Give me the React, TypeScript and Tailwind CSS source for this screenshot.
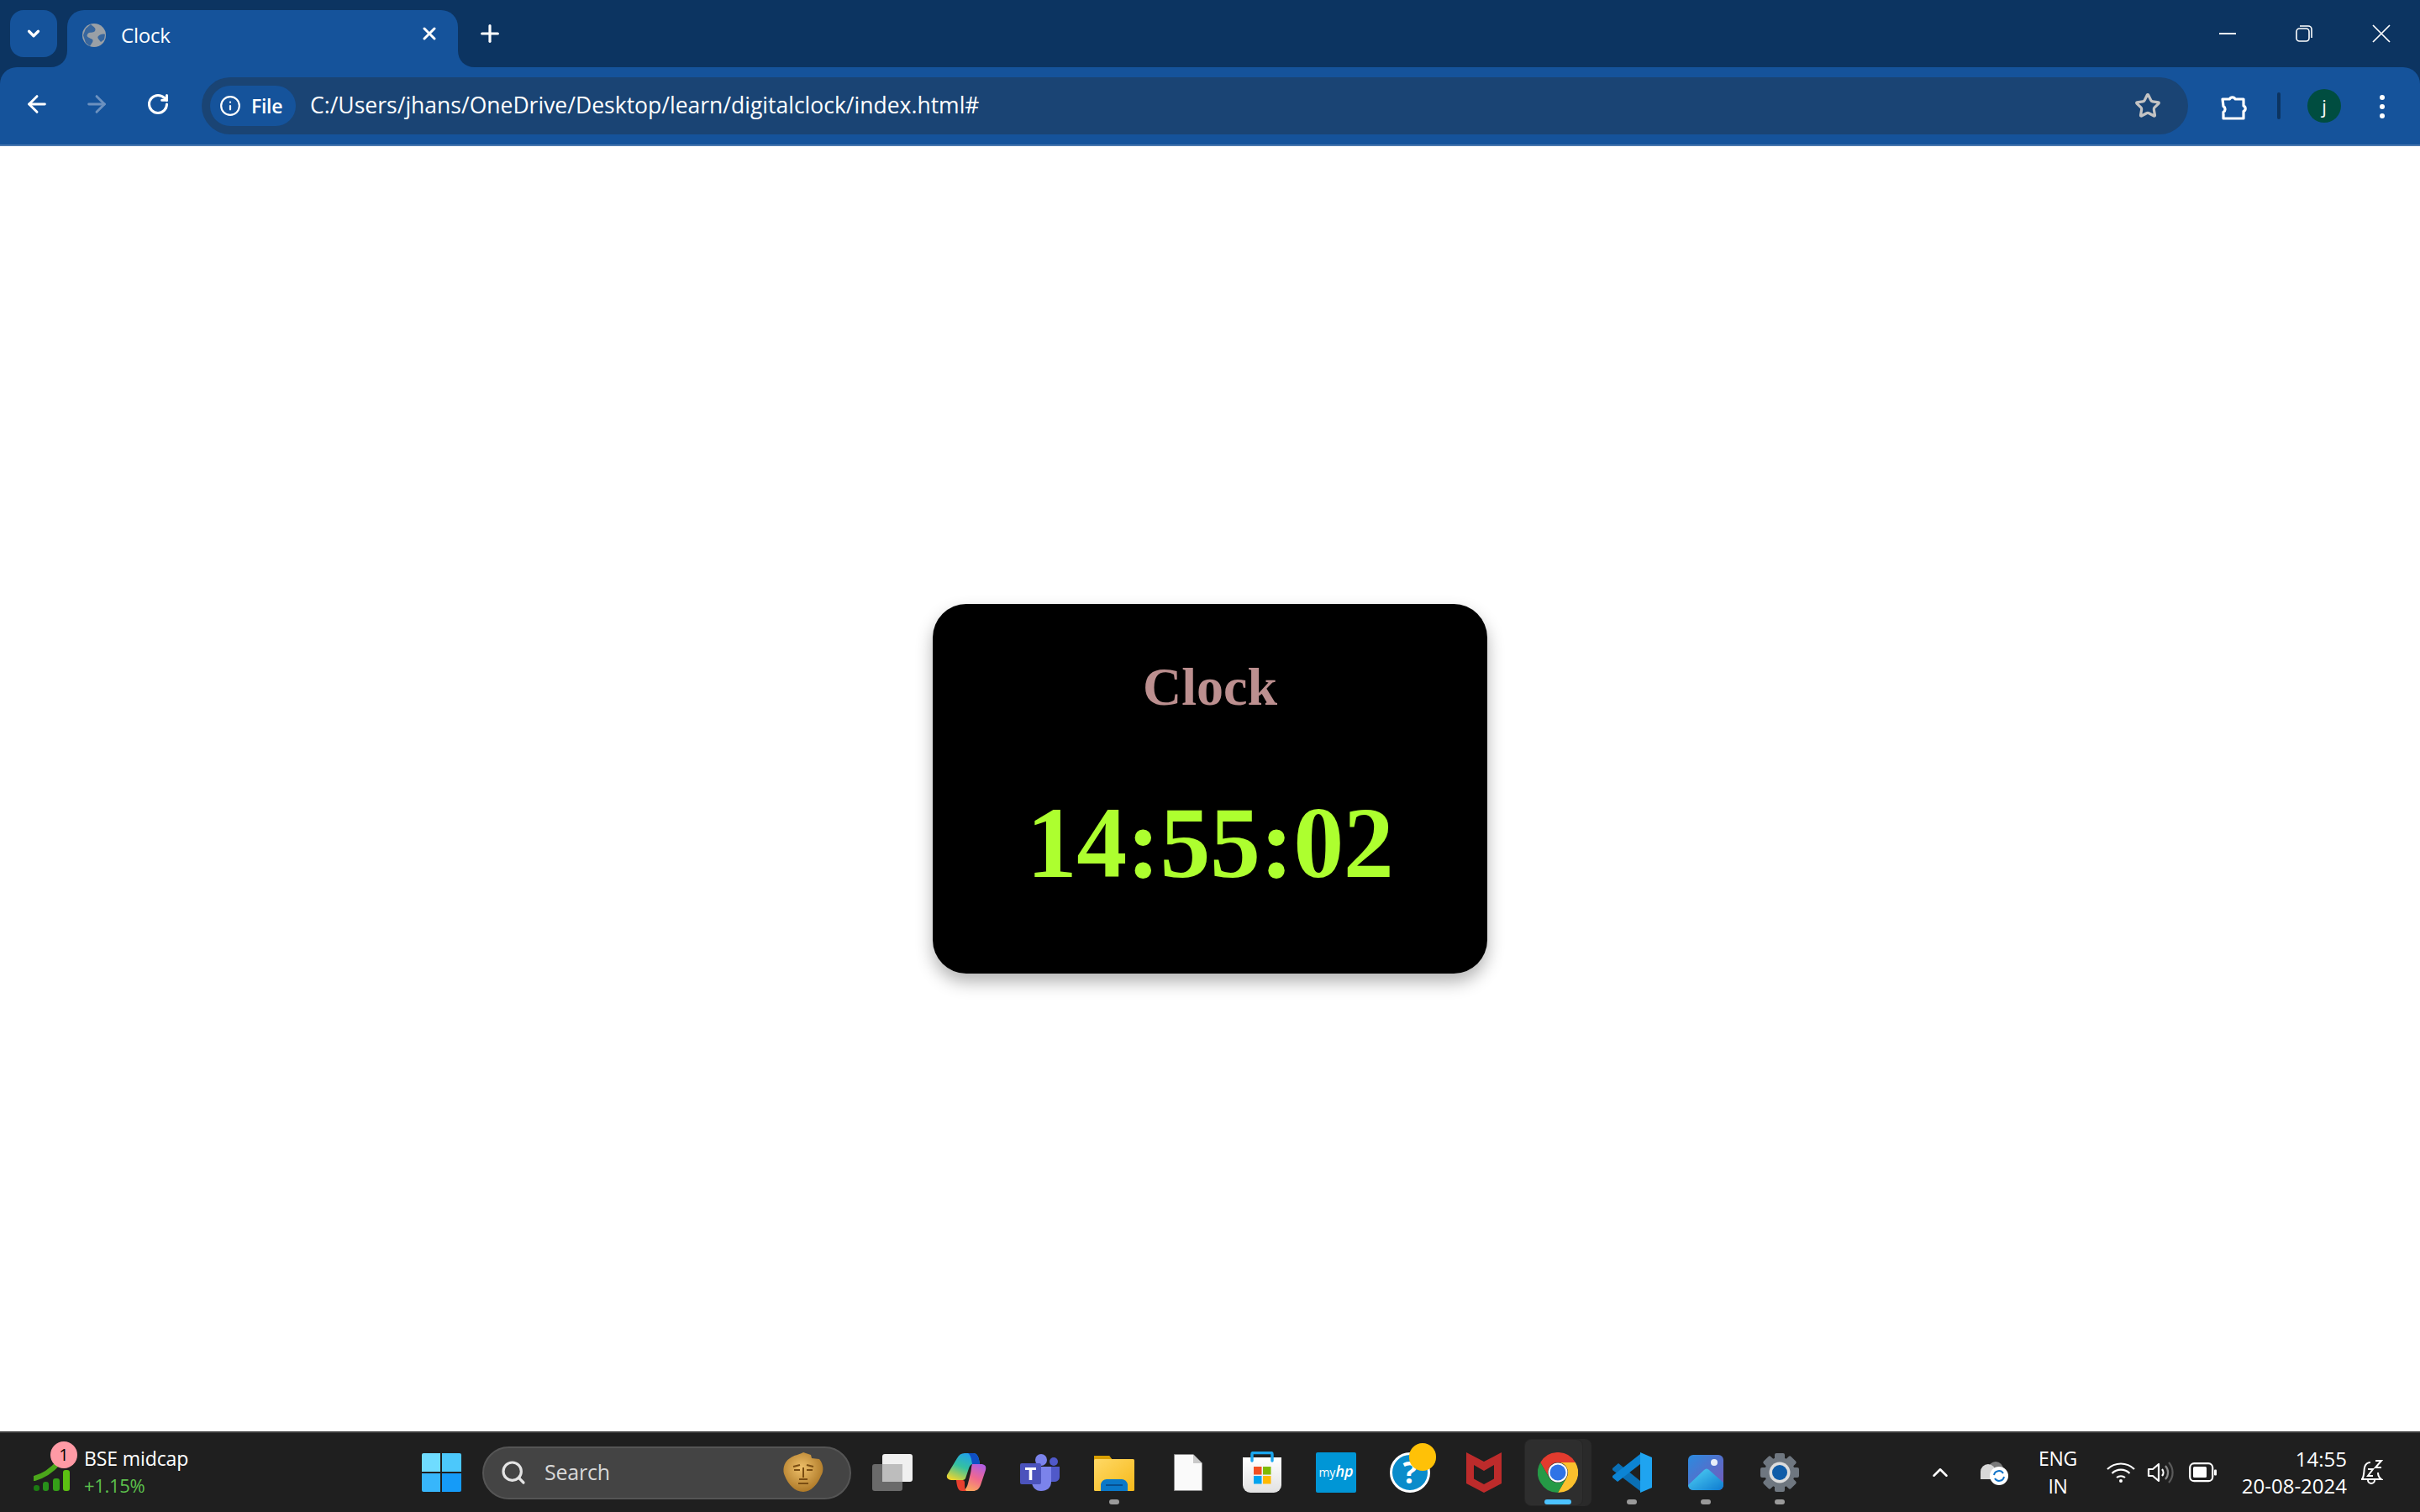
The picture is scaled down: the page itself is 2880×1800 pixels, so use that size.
import { ArrowLeft, ArrowRight, ChevronDown, ChevronUp, Info, Plus, RotateCw, Search, Star, X } from 'lucide-react'
import type { ReactNode } from 'react'

function Favicon() {
  return (
    <svg width="28" height="28" viewBox="0 0 28 28">
      <circle cx="14" cy="14" r="14" fill="#9aa0a6" />
      <path d="M10 1 C13 4 17 5 15 9 C13 12 8 9 6 13 C4 16 9 17 12 19 C14 21 10 25 9 27 L4 23 L1 14 L4 6Z" fill="#15539b" opacity="0.75" />
      <path d="M27 13 C24 12 21 13 19 15 C17 17 20 19 22 22 L26 19Z" fill="#15539b" opacity="0.75" />
    </svg>
  )
}

function Flare({ side }: { side: 'left' | 'right' }) {
  return (
    <svg className={side === 'left' ? 'absolute bottom-0 -left-5' : 'absolute bottom-0 -right-5'} width="20" height="20" viewBox="0 0 20 20">
      <path d={side === 'left' ? 'M0 20 C12 20 20 12 20 0 V20Z' : 'M0 0 C0 12 8 20 20 20 H0Z'} fill="#15539b" />
    </svg>
  )
}

function TabStrip() {
  return (
    <div className="h-20 bg-[#0c3461] flex text-white">
      <div className="mt-3 ml-3 w-14 h-14 rounded-2xl bg-[#15539b] flex items-center justify-center">
        <ChevronDown size={22} strokeWidth={3.5} />
      </div>
      <div className="relative mt-3 ml-3 w-[465px] h-[68px] rounded-t-[20px] bg-[#15539b] flex items-center pl-[18px] pb-[8px]">
        <Flare side="left" />
        <Favicon />
        <span className="ml-[18px] text-[24px] font-['Open_Sans',sans-serif] tracking-[-0.2px]">Clock</span>
        <X className="absolute right-[22px] top-[16px]" size={24} strokeWidth={3} />
        <Flare side="right" />
      </div>
      <div className="ml-[22px] mt-[24px]">
        <Plus size={32} strokeWidth={2.4} />
      </div>
      <div className="ml-auto flex">
        <div className="w-[92px] h-20 flex justify-center pt-[39px] pl-[2px]">
          <div className="w-5 h-0.5 bg-white" />
        </div>
        <div className="w-[92px] h-20 flex justify-center pt-[30px]">
          <svg width="20" height="20" viewBox="0 0 20 20" fill="none" stroke="white" strokeWidth="1.6">
            <rect x="1" y="4" width="15" height="15" rx="3.5" />
            <path d="M5 1 H15 A4 4 0 0 1 19 5 V15" />
          </svg>
        </div>
        <div className="w-[92px] h-20 flex justify-center pt-[29px]">
          <svg width="22" height="22" viewBox="0 0 22 22" stroke="white" strokeWidth="1.7">
            <path d="M1 1 L21 21 M21 1 L1 21" />
          </svg>
        </div>
      </div>
    </div>
  )
}

function Toolbar() {
  return (
    <div className="h-[94px] bg-[#15539b] rounded-t-[20px] border-b-2 border-[#4a78af] flex items-start text-white">
      <div className="mt-[28px] ml-[28px]">
        <ArrowLeft size={32} strokeWidth={2.2} />
      </div>
      <div className="mt-[28px] ml-[39px] text-[#6c91bf]">
        <ArrowRight size={32} strokeWidth={2.2} />
      </div>
      <div className="mt-[30px] ml-[43px]">
        <RotateCw size={28} strokeWidth={2.6} />
      </div>
      <div className="mt-3 ml-[38px] w-[2364px] h-[68px] rounded-[34px] bg-[#1a4474] flex items-center pl-[10px]">
        <div className="w-[102px] h-12 rounded-3xl bg-[#15539b] flex items-center pl-[11px] gap-[12px] font-['Open_Sans',sans-serif]">
          <Info size={26} strokeWidth={2} />
          <span className="text-[23px] font-semibold tracking-[-0.3px]">File</span>
        </div>
        <span className="ml-[17px] text-[26.5px] font-['Open_Sans',sans-serif]">
          C:/Users/jhans/OneDrive/Desktop/learn/digitalclock/index.html#
        </span>
        <Star className="ml-auto mr-[32px] text-[#c4c4c4]" size={32} strokeWidth={2.4} />
      </div>
      <div className="mt-[32px] ml-[38px]">
        <svg width="32" height="32" viewBox="0 0 32 32" fill="none" stroke="white" strokeWidth="3.2" strokeLinejoin="round">
          <path d="M3 6 H11.5 A3.5 3.5 0 0 1 18 6 H28 V14 A3.5 3.5 0 0 1 28 20.5 V29 H4 V21.5 A4 4 0 0 0 4 14.5Z" />
        </svg>
      </div>
      <div className="mt-[30px] ml-[36px] w-1 h-8 rounded-sm bg-[#0c3461]" />
      <div className="mt-[26px] ml-[32px] w-10 h-10 rounded-full bg-[#004d40] flex items-center justify-center text-[22px] font-['Open_Sans',sans-serif]">
        j
      </div>
      <div className="mt-[33px] ml-[46px] flex flex-col gap-[5px]">
        <div className="w-[6px] h-[6px] rounded-full bg-white" />
        <div className="w-[6px] h-[6px] rounded-full bg-white" />
        <div className="w-[6px] h-[6px] rounded-full bg-white" />
      </div>
    </div>
  )
}

function ClockCard() {
  return (
    <div className="w-[660px] h-[440px] rounded-[40px] bg-black shadow-[0_10px_20px_rgba(0,0,0,0.3)] flex flex-col items-center font-['Liberation_Serif',serif] font-bold">
      <h1 className="mt-[62px] text-[64px] leading-[74px] text-[#bc8f8f]">Clock</h1>
      <div className="mt-[80px] text-[120px] leading-[138px] tracking-[-0.4px] text-[#adff2f]">14:55:02</div>
    </div>
  )
}

function MaskIcon() {
  return (
    <svg width="50" height="48" viewBox="0 0 50 48">
      <defs>
        <radialGradient id="gold" cx="0.45" cy="0.4" r="0.7">
          <stop offset="0" stopColor="#efc06a" />
          <stop offset="1" stopColor="#a36d1c" />
        </radialGradient>
      </defs>
      <path d="M25 0 L34 3 L35 7 L44 8 C49 14 50 22 46 28 C42 38 34 47 25 47 C15 47 7 38 3 28 C0 22 1 12 9 7 C14 3 20 3 25 0Z" fill="url(#gold)" />
      <path d="M13 17 L21 15 M29 15 L37 17 M14 21 H21 M29 21 H36 M25 18 V30 M20 32 H30 M19 37 H31" stroke="#7a4d12" strokeWidth="2" fill="none" />
    </svg>
  )
}

function TaskView() {
  return (
    <svg width="48" height="44" viewBox="0 0 48 44">
      <rect x="0" y="12" width="36" height="32" rx="3" fill="#6a6a6a" />
      <rect x="12" y="0" width="36" height="33" rx="3" fill="#f0f0f0" />
      <rect x="12" y="12" width="24" height="21" fill="#bdbdbd" />
    </svg>
  )
}

function Copilot() {
  return (
    <svg width="48" height="46" viewBox="0 0 48 46">
      <defs>
        <linearGradient id="copL" x1="0.7" y1="0" x2="0.2" y2="1">
          <stop offset="0" stopColor="#1f9ff0" />
          <stop offset="0.5" stopColor="#35c1a0" />
          <stop offset="1" stopColor="#f2d52c" />
        </linearGradient>
        <linearGradient id="copR" x1="0.7" y1="0" x2="0.3" y2="1">
          <stop offset="0" stopColor="#b45ee0" />
          <stop offset="0.5" stopColor="#f0688e" />
          <stop offset="1" stopColor="#fba95c" />
        </linearGradient>
      </defs>
      <path d="M13 6 C15 2 18 0 22 0 H32 C37 0 39 4 40 13 H32 C29 13 28 15 27 18 L23 30 C22 32 19 33 8 32 C3 32 0 30 1 26Z" fill="url(#copL)" />
      <path d="M26 0 H32 C37 0 39 4 40 13 H31 C30 6 29 2 26 0Z" fill="#0f4fc4" />
      <path d="M31 13 H41 C46 13 48 15 47 20 L41 38 C39 43 36 45 32 45 H19 C23 44 25 40 26 36 L29 24 C30 20 30 15 31 13Z" fill="url(#copR)" />
      <path d="M12 32 H19 C21 32 22 33 22 35 C22 40 22 43 24 45 H19 C15 45 13 42 12 32Z" fill="#e8402e" />
    </svg>
  )
}

function Teams() {
  return (
    <svg width="48" height="44" viewBox="0 0 48 44">
      <circle cx="25" cy="7" r="7" fill="#7b83eb" />
      <circle cx="40" cy="9" r="5" fill="#5059c9" />
      <path d="M34 15 H47 V27 C47 31 44 33 40 33 H34Z" fill="#5059c9" />
      <path d="M14 15 H37 V33 C37 40 32 44 25 44 C18 44 14 39 14 33Z" fill="#7b83eb" />
      <rect x="0" y="11" width="25" height="25" rx="2" fill="#4b53bc" />
      <path d="M6 16 H19 V19 H14.3 V31 H10.7 V19 H6Z" fill="white" />
    </svg>
  )
}

function Folder() {
  return (
    <svg width="48" height="44" viewBox="0 0 48 44">
      <defs>
        <linearGradient id="folderBody" x1="0" y1="0" x2="1" y2="1">
          <stop offset="0" stopColor="#ffd966" />
          <stop offset="1" stopColor="#f6b91a" />
        </linearGradient>
      </defs>
      <path d="M1 2 H18 L22 7 H40 V20 H0 V3Z" fill="#d99f00" />
      <rect x="0" y="6" width="48" height="38" rx="1.5" fill="url(#folderBody)" />
      <path d="M0 2 H18 L21 6 H0Z" fill="#d99f00" />
      <path d="M8 44 V36 A7 7 0 0 1 15 30 H33 A7 7 0 0 1 40 36 V44Z" fill="#0a78c8" />
      <path d="M14 37 H34" stroke="#074f8f" strokeWidth="2" />
    </svg>
  )
}

function FileIcon() {
  return (
    <svg width="34" height="44" viewBox="0 0 34 44">
      <path d="M0.5 0.5 H23 L33.5 11 V43.5 H0.5Z" fill="#fafafa" stroke="#8a8a8a" />
      <path d="M23 0.5 V11 H33.5Z" fill="#c9c9c9" />
    </svg>
  )
}

function Store() {
  return (
    <svg width="46" height="50" viewBox="0 0 46 50">
      <defs>
        <linearGradient id="bag" x1="0" y1="0" x2="0" y2="1">
          <stop offset="0" stopColor="#ffffff" />
          <stop offset="1" stopColor="#e2e2e2" />
        </linearGradient>
      </defs>
      <path d="M0 7 H46 V40 A9 9 0 0 1 37 49 H9 A9 9 0 0 1 0 40Z" fill="url(#bag)" />
      <path d="M11 11 V3 A1.5 1.5 0 0 1 12.5 1.5 H33.5 A1.5 1.5 0 0 1 35 3 V11" fill="none" stroke="#1aa6ee" strokeWidth="3.4" strokeLinecap="round" />
      <rect x="13" y="18" width="9.5" height="9.5" fill="#f25022" />
      <rect x="24" y="18" width="9.5" height="9.5" fill="#7fba00" />
      <rect x="13" y="29" width="9.5" height="9.5" fill="#00a4ef" />
      <rect x="24" y="29" width="9.5" height="9.5" fill="#ffb900" />
    </svg>
  )
}

function MyHp() {
  return (
    <div className="w-12 h-12 rounded-[2px] bg-[#0096d6] flex items-baseline justify-center text-white font-['Open_Sans',sans-serif] pt-[12px]">
      <span className="text-[14px] leading-[20px]">my</span>
      <span className="text-[18px] leading-[20px] italic font-semibold">hp</span>
    </div>
  )
}

function HelpIcon() {
  return (
    <div className="relative w-12 h-12 rounded-full border-[3px] border-white bg-[#0a8ccb] flex items-center justify-center text-white text-[36px] leading-none font-bold font-['Open_Sans',sans-serif]">
      ?
      <div className="absolute -right-[10px] -top-[14px] w-8 h-[33px] rounded-full bg-[#ffc107]" />
    </div>
  )
}

function McAfee() {
  return (
    <svg width="42" height="48" viewBox="0 0 42 48">
      <path fillRule="evenodd" d="M0 0 L21 11 L42 0 V37 L21 48 L0 37Z M9 15 V31.5 L21 38 L33 31.5 V15 L21 22Z" fill="#bd2b2b" />
    </svg>
  )
}

function Chrome() {
  return (
    <svg width="48" height="48" viewBox="0 0 48 48">
      <path d="M3.2 12 A24 24 0 0 1 44.8 12 H24 A12 12 0 0 0 13.6 30Z" fill="#e33b2e" />
      <path d="M44.8 12 A24 24 0 0 1 24 48 L34.4 30 A12 12 0 0 0 24 12Z" fill="#fbc02d" />
      <path d="M24 48 A24 24 0 0 1 3.2 12 L13.6 30 A12 12 0 0 0 34.4 30Z" fill="#259a46" />
      <circle cx="24" cy="24" r="11.5" fill="white" />
      <circle cx="24" cy="24" r="9.5" fill="#2f73e6" />
    </svg>
  )
}

function VsCode() {
  return (
    <svg width="48" height="48" viewBox="0 0 48 48">
      <path d="M34 46 V34 L8 13 L1 19 L1 21Z" fill="#0a6fb5" />
      <path d="M34 2 V14 L7 35 L1 30 L1 28Z" fill="#0c84d4" />
      <path d="M34 0 L48 6 V42 L34 48Z" fill="#1fa4f0" />
    </svg>
  )
}

function Photos() {
  return (
    <svg width="42" height="42" viewBox="0 0 42 42">
      <defs>
        <linearGradient id="photoBg" x1="0" y1="0" x2="1" y2="1">
          <stop offset="0" stopColor="#2a8be0" />
          <stop offset="1" stopColor="#7a57b8" />
        </linearGradient>
        <linearGradient id="photoHill" x1="0" y1="0" x2="1" y2="1">
          <stop offset="0" stopColor="#52d4f5" />
          <stop offset="1" stopColor="#0d7ad0" />
        </linearGradient>
      </defs>
      <rect width="42" height="42" rx="6" fill="url(#photoBg)" />
      <circle cx="31" cy="9" r="4" fill="#e8eef8" />
      <path d="M0 36 L19 18 C21 16 23 16 25 18 L42 33 V36 A6 6 0 0 1 36 42 H6 A6 6 0 0 1 0 36Z" fill="url(#photoHill)" />
    </svg>
  )
}

function Gear() {
  const teeth = [0, 45, 90, 135, 180, 225, 270, 315]
  return (
    <svg width="48" height="48" viewBox="0 0 48 48">
      {teeth.map((deg) => (
        <rect key={deg} x="18" y="1" width="12" height="12" rx="2" fill="#6f7780" transform={`rotate(${deg} 24 24)`} />
      ))}
      <circle cx="24" cy="24" r="18" fill="#6f7780" />
      <circle cx="24" cy="24" r="12.5" fill="#dcdcdc" />
      <circle cx="24" cy="24" r="9" fill="#0f5ca8" />
    </svg>
  )
}

function WindowsLogo() {
  return (
    <div className="grid grid-cols-2 gap-[2px] w-[47px] h-[46px]">
      <div className="rounded-tl-[2px] bg-[#6fdcff]" />
      <div className="rounded-tr-[2px] bg-[#4cc8fb]" />
      <div className="rounded-bl-[2px] bg-[#37b6fb]" />
      <div className="rounded-br-[2px] bg-[#159bf8]" />
    </div>
  )
}

function TaskIcon({ children, dot, active }: { children: ReactNode; dot?: boolean; active?: boolean }) {
  return (
    <div className="relative w-[88px] h-[96px] flex items-center justify-center">
      {active && (
        <>
          <div className="absolute left-[40px] top-2 w-[44px] h-20 rounded-lg bg-[#2a2a2a]" />
          <div className="absolute left-[4px] top-2 w-[70px] h-20 rounded-lg bg-[#2e2e2e] border border-[#262626]" />
          <div className="absolute left-[28px] top-[80px] w-8 h-[6px] rounded-full bg-[#4cc2ff]" />
        </>
      )}
      <div className="relative">{children}</div>
      {dot && <div className="absolute left-[38px] top-[80px] w-3 h-[6px] rounded-full bg-[#9a9a9a]" />}
    </div>
  )
}

function Taskbar() {
  return (
    <div className="h-[96px] bg-[#1f1f1f] border-t-2 border-[#3a3a3a] flex items-center text-white font-['Open_Sans',sans-serif]">
      <div className="relative w-[481px] h-full">
        <svg className="absolute left-[40px] top-[30px]" width="46" height="40" viewBox="0 0 46 40">
          <path d="M1 24 C12 21 22 14 30 5" fill="none" stroke="#4ba61a" strokeWidth="6" strokeLinecap="round" />
          <rect x="0" y="32" width="7" height="7" rx="3" fill="#1c7a12" />
          <rect x="11" y="28" width="7" height="11" rx="3" fill="#28901a" />
          <rect x="23" y="24" width="8" height="15" rx="3" fill="#35a018" />
          <rect x="35" y="14" width="8" height="25" rx="3" fill="#5cc012" />
        </svg>
        <div className="absolute left-[60px] top-[10px] w-8 h-8 rounded-full bg-[#ff9aa5] text-black text-[20px] leading-8 text-center">1</div>
        <div className="absolute left-[100px] top-[14px] text-[23px] leading-[32px] tracking-[-0.1px] whitespace-nowrap">BSE midcap</div>
        <div className="absolute left-[100px] top-[46px] text-[22px] leading-[32px] tracking-[-0.3px] text-[#5cc04c]">+1.15%</div>
      </div>
      <div className="w-[88px] flex justify-center">
        <WindowsLogo />
      </div>
      <div className="ml-[5px] w-[439px] h-[63px] rounded-full bg-[#444444] border-2 border-[#555555] flex items-center pl-[19px] pr-[30px]">
        <Search size={32} strokeWidth={2.4} className="text-[#e4e4e4]" />
        <span className="ml-[21px] text-[25px] tracking-[-0.2px] text-[#d8d8d8]">Search</span>
        <div className="ml-auto">
          <MaskIcon />
        </div>
      </div>
      <div className="ml-[5px] flex">
        <TaskIcon><TaskView /></TaskIcon>
        <TaskIcon><Copilot /></TaskIcon>
        <TaskIcon><Teams /></TaskIcon>
        <TaskIcon dot><Folder /></TaskIcon>
        <TaskIcon><FileIcon /></TaskIcon>
        <TaskIcon><Store /></TaskIcon>
        <TaskIcon><MyHp /></TaskIcon>
        <TaskIcon><HelpIcon /></TaskIcon>
        <TaskIcon><McAfee /></TaskIcon>
        <TaskIcon active><Chrome /></TaskIcon>
        <TaskIcon dot><VsCode /></TaskIcon>
        <TaskIcon dot><Photos /></TaskIcon>
        <TaskIcon dot><Gear /></TaskIcon>
      </div>
      <div className="flex-1 flex items-center">
        <ChevronUp className="ml-[132px]" size={30} strokeWidth={2} />
        <svg className="ml-[33px]" width="34" height="30" viewBox="0 0 34 30">
          <circle cx="18" cy="11" r="9" fill="#7a7a7a" />
          <circle cx="9" cy="14" r="9" fill="#d8d8d8" />
          <rect x="0" y="14" width="20" height="9" fill="#d8d8d8" />
          <circle cx="22" cy="19" r="11" fill="white" />
          <path d="M16 18 A6 6 0 0 1 27 16 M28 20 A6 6 0 0 1 17 22" fill="none" stroke="#1173c8" strokeWidth="2" />
        </svg>
        <div className="ml-[28px] w-[60px] text-center text-[23px] leading-[33px] tracking-[-0.3px]">
          <div>ENG</div>
          <div>IN</div>
        </div>
        <svg className="ml-[28px]" width="34" height="26" viewBox="0 0 34 26" fill="none" stroke="white" strokeWidth="2.2">
          <path d="M1 9 A23 23 0 0 1 33 9" />
          <path d="M6.5 14 A15 15 0 0 1 27.5 14" />
          <path d="M12 19 A8 8 0 0 1 22 19" />
          <circle cx="17" cy="23" r="2" fill="white" stroke="none" />
        </svg>
        <svg className="ml-[14px]" width="34" height="32" viewBox="0 0 34 32" fill="none" strokeWidth="2.2">
          <path d="M2 12 H7 L14 6 V26 L7 20 H2Z" stroke="white" strokeLinejoin="round" />
          <path d="M18 12 A6 6 0 0 1 18 20" stroke="white" />
          <path d="M22 8 A12 12 0 0 1 22 24" stroke="#8a8a8a" />
          <path d="M26 4 A18 18 0 0 1 26 28" stroke="#5a5a5a" />
        </svg>
        <svg className="ml-[16px]" width="34" height="24" viewBox="0 0 34 24">
          <rect x="1.2" y="1.2" width="27" height="21" rx="5" fill="none" stroke="white" strokeWidth="2.2" />
          <rect x="5" y="5" width="16" height="13" rx="1.5" fill="white" />
          <rect x="30" y="8.5" width="3" height="7" rx="1" fill="white" />
        </svg>
        <div className="ml-[28px] w-[126px] text-right text-[24px] leading-[32px] whitespace-nowrap">
          <div>14:55</div>
          <div>20-08-2024</div>
        </div>
        <svg className="ml-[15px]" width="28" height="32" viewBox="0 0 28 32" fill="none" stroke="white" strokeWidth="2">
          <path d="M3 24 C6 20 5 14 6 10 C7 6 10 4 13 4" />
          <path d="M22 16 C22 19 23 22 26 24 H2" />
          <path d="M10 25 A4 4 0 0 0 18 25" />
          <path d="M10 12 H16 L10 20 H16" />
          <path d="M19 2 H26 L19 10 H26" />
        </svg>
      </div>
    </div>
  )
}

export default function App() {
  return (
    <div className="w-[2880px] h-[1800px] bg-white flex flex-col overflow-hidden">
      <div className="bg-[#0c3461]">
        <TabStrip />
        <Toolbar />
      </div>
      <main className="flex-1 flex items-center justify-center">
        <ClockCard />
      </main>
      <Taskbar />
    </div>
  )
}
